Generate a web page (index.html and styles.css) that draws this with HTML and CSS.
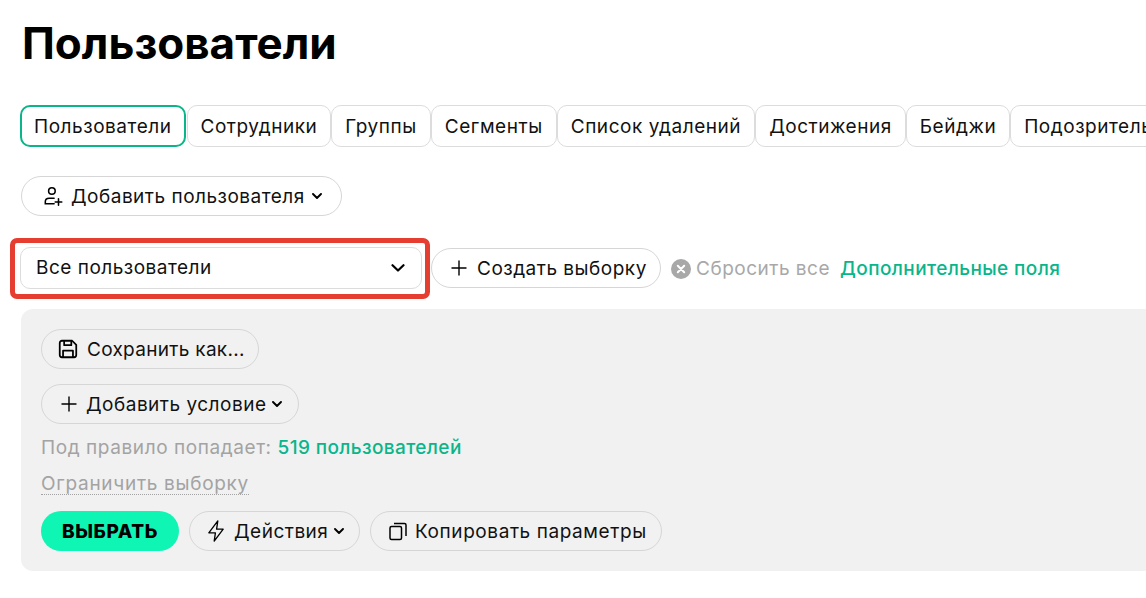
FILE: index.html
```html
<!DOCTYPE html>
<html lang="ru">
<head>
<meta charset="utf-8">
<title>Пользователи</title>
<link rel="stylesheet" href="styles.css">
</head>
<body>
<main class="page">
  <h1 class="title">Пользователи</h1>
  <nav class="tabs">
    <a class="tab tab-active">Пользователи</a>
    <a class="tab">Сотрудники</a>
    <a class="tab">Группы</a>
    <a class="tab">Сегменты</a>
    <a class="tab">Список удалений</a>
    <a class="tab">Достижения</a>
    <a class="tab">Бейджи</a>
    <a class="tab">Подозрительные</a>
  </nav>
  <div class="add-row">
    <button class="btn btn-add-user">
      <svg class="icon-md" viewBox="0 0 20 20" fill="none" stroke="#000" stroke-width="1.4" stroke-linecap="round"><circle cx="9" cy="5.5" r="3"/><path d="M11 12H6.5C4.5 12 3 13.4 3 15.2V17h8"/><path d="M15 12.5v6M12 15.5h6"/></svg>
      <span>Добавить пользователя</span>
      <svg class="caret" viewBox="0 0 10 6" fill="none" stroke="#000" stroke-width="1.9" stroke-linecap="round" stroke-linejoin="round"><path d="M1 1l4 4 4-4"/></svg>
    </button>
  </div>
  <div class="filter-row">
    <div class="highlight">
      <div class="select">
        <span class="select-label">Все пользователи</span>
        <svg class="select-caret" viewBox="0 0 14 8" fill="none" stroke="#000" stroke-width="2.2" stroke-linecap="round" stroke-linejoin="round"><path d="M1.5 1.2L7 6.5l5.5-5.3"/></svg>
      </div>
    </div>
    <button class="btn btn-create">
      <svg class="icon-plus" viewBox="0 0 16 16" fill="none" stroke="#000" stroke-width="1.4" stroke-linecap="round"><path d="M8 1v14M1 8h14"/></svg>
      <span>Создать выборку</span>
    </button>
    <span class="reset">
      <svg class="reset-icon" viewBox="0 0 20 20"><circle cx="10" cy="10" r="10" fill="#a8a8a8"/><path d="M6.8 6.8l6.4 6.4M13.2 6.8l-6.4 6.4" stroke="#fff" stroke-width="2" stroke-linecap="round"/></svg>
      <span>Сбросить все</span>
    </span>
    <a class="extra-link">Дополнительные поля</a>
  </div>
  <section class="panel">
    <div class="panel-row">
      <button class="btn btn-save">
        <svg class="icon-md" viewBox="0 0 20 20" fill="none" stroke="#000" stroke-width="1.6" stroke-linejoin="round"><path d="M2.5 4.5a2 2 0 0 1 2-2h9.3l3.7 3.7v9.3a2 2 0 0 1-2 2h-11a2 2 0 0 1-2-2z"/><path d="M6.5 2.5v4h6.5v-4M5.5 17.5v-6h9v6"/></svg>
        <span>Сохранить как...</span>
      </button>
    </div>
    <div class="panel-row panel-row-condition">
      <button class="btn btn-condition">
        <svg class="icon-plus" viewBox="0 0 16 16" fill="none" stroke="#000" stroke-width="1.4" stroke-linecap="round"><path d="M8 1v14M1 8h14"/></svg>
        <span>Добавить условие</span>
        <svg class="caret" viewBox="0 0 10 6" fill="none" stroke="#000" stroke-width="1.9" stroke-linecap="round" stroke-linejoin="round"><path d="M1 1l4 4 4-4"/></svg>
      </button>
    </div>
    <p class="rule">Под правило попадает: <a class="rule-count">519 пользователей</a></p>
    <p class="limit"><span class="limit-text">Ограничить выборку</span></p>
    <div class="actions">
      <button class="btn-primary">ВЫБРАТЬ</button>
      <button class="btn btn-actions">
        <svg class="icon-lg" viewBox="0 0 20 20" fill="none" stroke="#000" stroke-width="1.1" stroke-linejoin="round"><path d="M11.5 1.5L4 11.5h5.5l-1 7 7.5-10h-5.5z"/></svg>
        <span>Действия</span>
        <svg class="caret" viewBox="0 0 10 6" fill="none" stroke="#000" stroke-width="1.9" stroke-linecap="round" stroke-linejoin="round"><path d="M1 1l4 4 4-4"/></svg>
      </button>
      <button class="btn btn-copy">
        <svg class="icon" viewBox="0 0 20 20" fill="none" stroke="#000" stroke-width="1.5" stroke-linejoin="round"><rect x="2" y="5.5" width="11.5" height="13" rx="1.5"/><path d="M6 2.5h10.5a1.5 1.5 0 0 1 1.5 1.5v11"/></svg>
        <span>Копировать параметры</span>
      </button>
    </div>
  </section>
</main>
</body>
</html>
```

FILE: styles.css
```css
* { box-sizing: border-box; }
html, body { margin: 0; height: 100%; overflow: hidden; background: #fff; }
body {
  font-family: Inter, "Noto Sans", "Liberation Sans", sans-serif;
  color: #111;
  font-size: 19px;
  letter-spacing: 0.5px;
}
.page { padding: 17px 0 0 0; width: 1146px; }
.title {
  margin: 0 0 0 22px;
  font-size: 44px;
  line-height: 52px;
  font-weight: 700;
  color: #000;
  letter-spacing: 0;
}
.tabs {
  display: flex;
  margin: 36px 0 0 20px;
  width: 1126px;
  overflow: hidden;
  letter-spacing: 0.54px;
}
.tab {
  flex: none;
  height: 42px;
  display: flex;
  align-items: center;
  padding: 0 13px;
  border: 1px solid #dcdcdc;
  border-radius: 10px;
  background: #fff;
  white-space: nowrap;
}
.tab-active { border: 2px solid #0ab58a; padding: 0 12px; margin-right: 1px; }
.add-row { margin: 29px 0 0 21px; }
.btn {
  display: inline-flex;
  align-items: center;
  height: 40px;
  border: 1px solid #d6d6d6;
  border-radius: 20px;
  background: transparent;
  font: inherit;
  letter-spacing: inherit;
  color: #111;
  white-space: nowrap;
  padding: 0;
}
.icon { width: 20px; height: 20px; flex: none; }
.icon-md { width: 22px; height: 22px; flex: none; }
.icon-lg { width: 24px; height: 24px; flex: none; }
.icon-plus { width: 16px; height: 16px; flex: none; }
.caret { width: 10px; height: 6px; flex: none; }
.btn-add-user { width: 321px; padding-left: 20px; gap: 7px; }
.filter-row { display: flex; align-items: center; margin: 22px 0 0 10px; }
.highlight {
  width: 420px;
  height: 61px;
  border: 5px solid #e53e30;
  border-radius: 7px;
  padding: 4px 3px 0 5px;
  flex: none;
}
.select {
  height: 42px;
  border: 1px solid #dcdcdc;
  border-radius: 10px;
  display: flex;
  align-items: center;
  justify-content: space-between;
  padding: 0 16px 0 15px;
  background: #fff;
}
.select-label { padding-bottom: 2px; }
.select-caret { width: 14px; height: 8px; }
.btn-create { width: 230px; margin-left: 1px; margin-bottom: 1px; padding-left: 19px; gap: 10px; }
.reset { display: inline-flex; align-items: center; margin-left: 10px; color: #a8a8a8; gap: 5px; }
.reset-icon { width: 20px; height: 20px; flex: none; }
.extra-link { color: #0ab58a; margin-left: 10px; font-weight: 500; letter-spacing: 0.4px; }
.panel {
  margin: 10px -20px 0 21px;
  height: 262px;
  background: #f1f1f1;
  border-radius: 12px;
  padding: 20px;
}
.panel-row-condition { margin-top: 15px; }
.btn-save { width: 218px; padding-left: 15px; gap: 8px; letter-spacing: 0.3px; }
.btn-condition { width: 258px; padding-left: 19px; gap: 9px; }
.btn-condition .caret { margin-left: -3px; }
.rule { margin: 13px 0 0; line-height: 22px; color: #a3a3a3; letter-spacing: 0.58px; }
.rule-count { color: #0ab58a; font-weight: 500; letter-spacing: 0.38px; }
.limit { margin: 14px 0 0; line-height: 22px; color: #a3a3a3; }
.limit-text { border-bottom: 1px dotted #a3a3a3; display: inline-block; line-height: 21px; letter-spacing: 0.7px; }
.actions { display: flex; gap: 10px; margin-top: 16px; }
.btn-primary {
  width: 138px;
  height: 40px;
  border: 0;
  border-radius: 20px;
  background: #0ff5b4;
  font: inherit;
  letter-spacing: 0.6px;
  font-weight: 800;
  color: #000;
}
.btn-actions { width: 171px; padding-left: 14px; gap: 6px; }
.btn-copy { width: 292px; padding-left: 17px; gap: 7px; letter-spacing: 0.58px; }
```
